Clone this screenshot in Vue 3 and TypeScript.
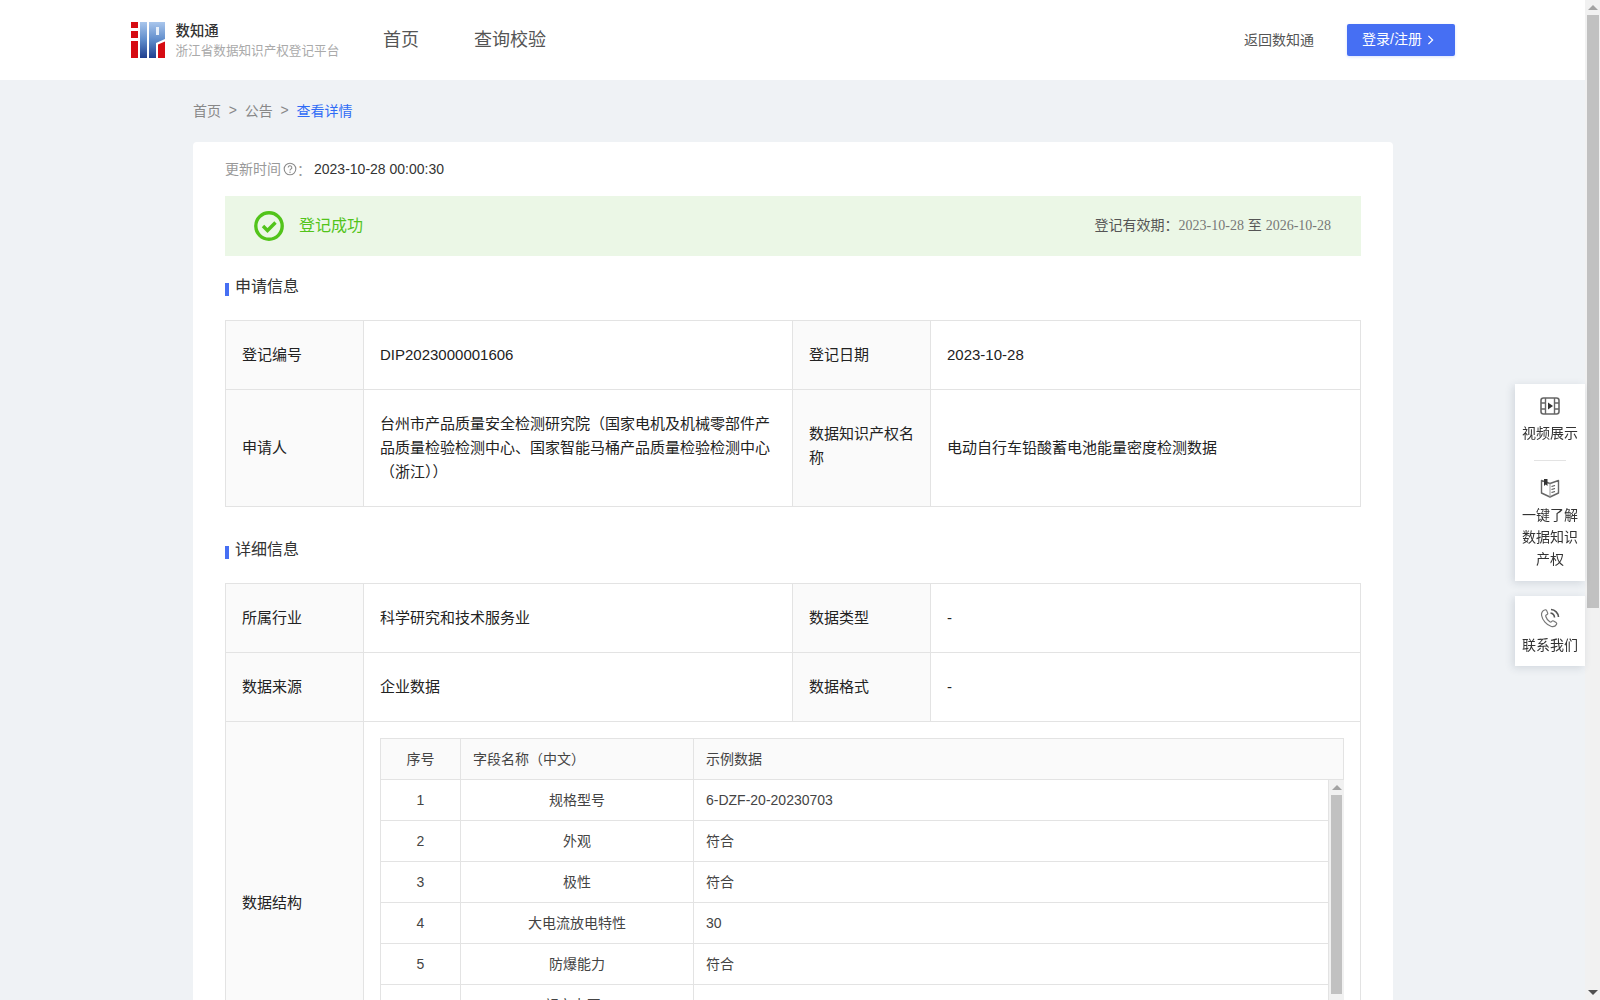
<script setup lang="ts">
interface Row { no: number; name: string; sample: string }
const rows: Row[] = [
  { no: 1, name: '规格型号', sample: '6-DZF-20-20230703' },
  { no: 2, name: '外观', sample: '符合' },
  { no: 3, name: '极性', sample: '符合' },
  { no: 4, name: '大电流放电特性', sample: '30' },
  { no: 5, name: '防爆能力', sample: '符合' },
  { no: 6, name: '额定电压V', sample: '48' },
]
const isCjk = (s: string): boolean => /[^\x00-\x7f]/.test(s)
</script>

<template>
  <div class="page">
    <div class="scroll">
      <header class="header">
        <div class="brand">
          <svg class="logo" viewBox="0 0 34 36" aria-hidden="true">
            <defs>
              <linearGradient id="lg" x1="0" y1="0" x2="0" y2="1">
                <stop offset="0" stop-color="#a9c6ec" />
                <stop offset="0.5" stop-color="#5f8ccb" />
                <stop offset="1" stop-color="#1f3f8f" />
              </linearGradient>
            </defs>
            <rect x="0" y="0" width="7" height="6" fill="#d60b12" />
            <rect x="0" y="9" width="7" height="7" fill="#d60b12" />
            <rect x="0" y="19" width="7" height="17" fill="#d60b12" />
            <rect x="9" y="0" width="7" height="36" fill="url(#lg)" />
            <path d="M18 0h16v17l-9 4v15h-7z" fill="url(#lg)" />
            <rect x="25" y="5" width="3" height="8" fill="#e8f0fa" />
            <path d="M27 36V22.500l7-3V36z" fill="#d60b12" />
          </svg>
          <div class="brand-text">
            <div class="brand-name">数知通</div>
            <div class="brand-sub">浙江省数据知识产权登记平台</div>
          </div>
        </div>
        <nav class="nav">
          <a>首页</a>
          <a>查询校验</a>
        </nav>
        <div class="spacer"></div>
        <a class="back">返回数知通</a>
        <button class="login">
          <span>登录/注册</span>
          <svg viewBox="0 0 8 12" class="chev" aria-hidden="true"><path d="M1.500 1l5 5-5 5" fill="none" stroke="#fff" stroke-width="1.500" /></svg>
        </button>
      </header>

      <main class="main">
        <div class="crumbs">
          <span>首页</span><i>&gt;</i><span>公告</span><i>&gt;</i><b>查看详情</b>
        </div>

        <section class="card">
          <div class="update">
            <span class="update-label">更新时间</span>
            <svg class="help" viewBox="0 0 14 14" aria-hidden="true">
              <circle cx="7" cy="7" r="5.800" fill="none" stroke="#8c8c8c" stroke-width="1.100" />
              <path d="M5.200 5.600a1.800 1.800 0 1 1 2.700 1.500c-.6.4-.9.6-.9 1.400" fill="none" stroke="#8c8c8c" stroke-width="1.100" />
              <circle cx="7" cy="10.200" r=".7" fill="#8c8c8c" />
            </svg>
            <span class="colon">：</span>
            <span class="update-value">2023-10-28 00:00:30</span>
          </div>

          <div class="status">
            <svg class="ok" viewBox="0 0 30 30" aria-hidden="true">
              <circle cx="15" cy="15" r="13.200" fill="none" stroke="#52c41a" stroke-width="3.400" />
              <path d="M9 15l4.500 4.500L21.500 11.500" fill="none" stroke="#52c41a" stroke-width="3.400" />
            </svg>
            <span class="status-text">登记成功</span>
            <span class="validity">登记有效期：<em>2023-10-28</em> 至 <em>2026-10-28</em></span>
          </div>

          <h3 class="title first">申请信息</h3>
          <div class="info">
            <div class="th row-a">登记编号</div>
            <div class="td row-a big">DIP2023000001606</div>
            <div class="th row-a">登记日期</div>
            <div class="td row-a big">2023-10-28</div>
            <div class="th">申请人</div>
            <div class="td lines">台州市产品质量安全检测研究院（国家电机及机械零部件产品质量检验检测中心、国家智能马桶产品质量检验检测中心（浙江））</div>
            <div class="th lh">数据知识产权名称</div>
            <div class="td">电动自行车铅酸蓄电池能量密度检测数据</div>
          </div>

          <h3 class="title">详细信息</h3>
          <div class="info detail">
            <div class="th row-a">所属行业</div>
            <div class="td row-a">科学研究和技术服务业</div>
            <div class="th row-a">数据类型</div>
            <div class="td row-a big">-</div>
            <div class="th row-a">数据来源</div>
            <div class="td row-a">企业数据</div>
            <div class="th row-a">数据格式</div>
            <div class="td row-a big">-</div>
            <div class="th">数据结构</div>
            <div class="td wide">
              <div class="struct">
                <div class="struct-head">
                  <span class="c1">序号</span>
                  <span class="c2">字段名称（中文）</span>
                  <span class="c3">示例数据</span>
                </div>
                <div class="struct-body">
                  <div class="struct-rows">
                    <div v-for="r in rows" :key="r.no" class="struct-row">
                      <span class="c1 latin">{{ r.no }}</span>
                      <span class="c2 center">{{ r.name }}</span>
                      <span class="c3" :class="{ latin: !isCjk(r.sample) }">{{ r.sample }}</span>
                    </div>
                  </div>
                  <div class="sb sb-inner" aria-hidden="true">
                    <i class="up"></i>
                    <i class="thumb"></i>
                  </div>
                </div>
              </div>
            </div>
          </div>
        </section>
      </main>
    </div>

    <div class="sb sb-page" aria-hidden="true">
      <i class="up"></i>
      <i class="thumb"></i>
      <i class="down"></i>
    </div>

    <aside class="float">
      <div class="float-box">
        <div class="float-item">
          <svg viewBox="0 0 20 20" aria-hidden="true">
            <rect x="1" y="2" width="18" height="16" rx="2.500" fill="none" stroke="#666" stroke-width="1.600" />
            <path d="M5.500 2v16M14.500 2v16M1 7h4.500M1 13h4.500M14.500 7H19M14.500 13H19" fill="none" stroke="#666" stroke-width="1.400" />
            <path d="M8 6.500l5 3.500-5 3.500z" fill="#333" />
          </svg>
          <span>视频展示</span>
        </div>
        <div class="float-line"></div>
        <div class="float-item">
          <svg viewBox="0 0 20 20" aria-hidden="true">
            <path d="M1.500 2.500L10 5.500l8.500-3V15L10 19l-8.500-4z" fill="none" stroke="#666" stroke-width="1.400" stroke-linejoin="round" />
            <path d="M4 1h3.500v7L5.700 6.500 4 8z" fill="#333" />
            <path d="M11.500 8.500l3.500-1M11.500 11.500l3.500-1M11.500 14.500l3.500-1" fill="none" stroke="#555" stroke-width="1.300" />
            <path d="M10 5.500V19" fill="none" stroke="#999" stroke-width="1" />
          </svg>
          <span>一键了解<br />数据知识<br />产权</span>
        </div>
      </div>
      <div class="float-box last">
        <div class="float-item">
          <svg viewBox="0 0 20 20" aria-hidden="true">
            <path d="M4.500 2C2.300 3 1.200 4.800 1.600 7.500c.7 4.300 5 9.600 9.800 11 2.100.5 4-.2 5.100-2.100.4-.7.2-1.400-.4-1.800l-2.500-1.600c-.7-.4-1.300-.3-1.700.3-.5.8-1.200 1-2.100.4-1.900-1.200-3.400-3.200-4-5.200-.3-1 .1-1.600 1.100-1.900.7-.2 1-.8.800-1.500L6.700 2.600C6.400 1.800 5.400 1.500 4.500 2z" fill="none" stroke="#777" stroke-width="1.200" />
            <path d="M10.500 5a4.800 4.800 0 0 1 4 4.500M11 1.500a8 8 0 0 1 7.500 7.500" fill="none" stroke="#555" stroke-width="1.600" />
          </svg>
          <span>联系我们</span>
        </div>
      </div>
    </aside>
  </div>
</template>

<style>
html, body { margin: 0; height: 100%; overflow: hidden; }
#app { height: 100%; }
</style>

<style scoped>
.page {
  display: flex;
  height: 1000px;
  overflow: hidden;
  background: #eff2f5;
  font-family: "Liberation Sans", "Noto Sans CJK SC", sans-serif;
  font-size: 14px;
  color: #333;
}
.scroll { flex: 1; min-width: 0; overflow: hidden; }

.sb {
  display: flex;
  flex: none;
  flex-direction: column;
  box-sizing: border-box;
  width: 15px;
  background: #f1f1f1;
}
.sb i { display: block; }
.up, .down {
  width: 0;
  height: 0;
  margin-left: 2.500px;
  border-left: 5px solid transparent;
  border-right: 5px solid transparent;
}
.up { border-bottom: 5px solid #a3a3a3; margin-top: 5px; margin-bottom: 5px; }
.down { border-top: 5px solid #505050; margin-top: auto; margin-bottom: 5px; }
.thumb { margin-left: 2px; background: #c1c1c1; }
.sb-page .thumb { width: 12px; height: 593px; }
.sb-inner .thumb { width: 11px; height: 199px; }

.header {
  display: flex;
  align-items: center;
  height: 80px;
  padding: 0 130px 0 131px;
  background: #fff;
}
.brand { display: flex; align-items: center; gap: 10.500px; width: 252px; }
.logo { width: 34px; height: 36px; flex: none; }
.brand-name { font-size: 14.400px; font-weight: 500; color: #333; line-height: 20px; }
.brand-sub { font-size: 12.600px; color: #aaa; line-height: 18px; margin-top: 1px; white-space: nowrap; }
.nav { display: flex; gap: 55px; padding-bottom: 4px; font-size: 18px; color: #555; }
.spacer { flex: 1; }
.back { padding-bottom: 2px; color: #555; margin-right: 33px; }
.login {
  display: flex;
  align-items: center;
  gap: 5px;
  box-sizing: border-box;
  width: 108px;
  height: 32px;
  padding: 0 0 4px 15px;
  border: 0;
  border-radius: 2px;
  background: #466ff3;
  color: #fff;
  font: inherit;
  box-shadow: 0 1px 3px rgba(70, 111, 243, .2);
}
.chev { width: 7px; height: 10px; margin-top: 3px; }

.main { width: 1200px; margin-left: 193px; padding-bottom: 48px; }
.crumbs {
  display: flex;
  align-items: center;
  box-sizing: border-box;
  height: 62px;
  padding-bottom: 2px;
  gap: 7.800px;
  color: #888;
}
.crumbs i { font-style: normal; }
.crumbs b { font-weight: 400; color: #2f6cf6; }

.card {
  background: #fff;
  border-radius: 4px;
  padding: 0 32px 60px;
}
.update { display: flex; align-items: center; height: 54px; color: #999; }
.update-label { padding-bottom: 3px; }
.help { width: 14px; height: 14px; margin-left: 2px; }
.colon { width: 18px; }
.update-value { color: #333; margin-left: -1px; }
.status {
  display: flex;
  align-items: center;
  height: 60px;
  padding: 0 30px 0 29px;
  background: #ebf7e6;
}
.ok { width: 30px; height: 30px; margin-right: 15px; }
.status-text { flex: 1; padding-bottom: 5px; font-size: 16px; color: #52c41a; }
.validity { padding-bottom: 5px; color: #555; }
.validity em { font-style: normal; font-family: "Liberation Serif", serif; color: #777; font-size: 14px; }

.title {
  position: relative;
  margin: 0;
  padding-left: 10px;
  font-size: 16px;
  font-weight: 400;
  line-height: 22px;
  color: #333;
}
.title::before {
  content: "";
  position: absolute;
  left: 0;
  top: 7px;
  width: 4px;
  height: 13px;
  background: #466ff3;
}
.title.first { margin-top: 20px; margin-bottom: 22px; }
.title:not(.first) { margin-top: 32px; margin-bottom: 22px; }

.info {
  display: grid;
  grid-template-columns: 138px 429px 138px 1fr;
  border-top: 1px solid #e3e3e3;
  border-left: 1px solid #e3e3e3;
  font-size: 15px;
  color: #222;
}
.th, .td {
  display: flex;
  align-items: center;
  box-sizing: border-box;
  padding: 0 15px 4px 16px;
  border-right: 1px solid #e3e3e3;
  border-bottom: 1px solid #e3e3e3;
}
.th { background: #fafafa; }
.td.big { padding-bottom: 2px; }
.row-a { height: 69px; }
.lines { line-height: 24px; padding-top: 22px; padding-bottom: 22px; }
.lh { line-height: 24px; }
.wide { grid-column: span 3; align-items: flex-start; padding: 16px; }

.struct { width: 100%; font-size: 14px; color: #444; }
.struct-head, .struct-row { display: flex; box-sizing: border-box; height: 41px; }
.struct-head {
  height: 42px;
  background: #fafafa;
  border: 1px solid #e3e3e3;
}
.c1, .c2, .c3 { display: flex; align-items: center; box-sizing: border-box; padding: 0 12px 2px; }
.struct-head span { padding-bottom: 3px; }
.latin { padding-bottom: 0; }
.c1 { width: 80px; justify-content: center; border-right: 1px solid #e3e3e3; }
.c2 { width: 233px; border-right: 1px solid #e3e3e3; }
.c2.center { justify-content: center; }
.c3 { flex: 1; }
.struct-body {
  display: flex;
  height: 288px;
  border-left: 1px solid #e3e3e3;
  background: #fff;
}
.struct-rows { flex: 1; min-width: 0; border-right: 1px solid #e3e3e3; }
.struct-row { border-bottom: 1px solid #e3e3e3; }

.float {
  position: fixed;
  right: 15px;
  top: 384px;
  display: flex;
  flex-direction: column;
  gap: 15px;
  width: 70px;
}
.float-box {
  background: #fff;
  box-shadow: -2px 2px 8px rgba(40, 60, 90, .15);
  padding: 12px 0 11px;
}
.float-box.last { padding-bottom: 10px; }
.float-item {
  display: flex;
  flex-direction: column;
  align-items: center;
  gap: 6px;
  text-align: center;
  line-height: 22px;
  color: #333;
}
.float-item svg { width: 20px; height: 20px; }
.float-line { width: 32px; height: 1px; margin: 16px auto 17px; background: #e3e3e3; }
</style>
